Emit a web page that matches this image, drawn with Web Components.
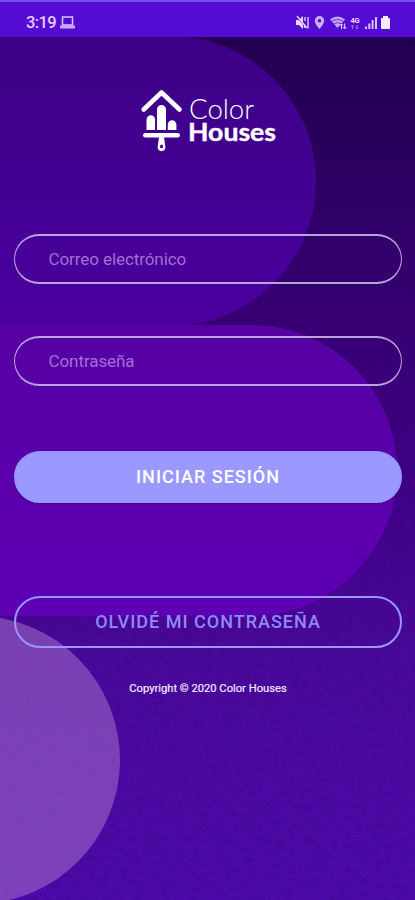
<!DOCTYPE html>
<html lang="es"><head><meta charset="utf-8"><title>Color Houses</title>
<style>html,body{margin:0;height:100%;overflow:hidden;background:#2b0061}body{font-family:Roboto,sans-serif}</style></head>
<body>
<login-screen></login-screen>
<script>
const define = (name, html) => {
  const t = document.createElement('template');
  t.innerHTML = html;
  customElements.define(name, class extends HTMLElement {
    constructor() { super(); this.attachShadow({mode: 'open'}).append(t.content.cloneNode(true)); }
  });
};

define('screen-backdrop', `<style>:host{display:block;position:absolute;inset:0;z-index:-1}svg{display:block}</style>
<svg width="415" height="900" viewBox="0 0 415 900">
<defs>
<linearGradient id="base" x1="0" y1="37" x2="0" y2="900" gradientUnits="userSpaceOnUse"><stop offset="0" stop-color="#210050"/><stop offset=".3" stop-color="#350070"/><stop offset=".5" stop-color="#3e0084"/><stop offset=".7" stop-color="#480898"/><stop offset=".85" stop-color="#4c09a2"/><stop offset="1" stop-color="#4d0aa8"/></linearGradient>
<linearGradient id="p1" x1="0" y1="0" x2="0" y2="1"><stop offset="0" stop-color="#3c0085"/><stop offset="1" stop-color="#4b009f"/></linearGradient>
<linearGradient id="p2" x1="0" y1="0" x2="0" y2="1"><stop offset="0" stop-color="#5600a3"/><stop offset="1" stop-color="#5e00b4"/></linearGradient>
<linearGradient id="fade" x1="0" y1="350" x2="0" y2="900" gradientUnits="userSpaceOnUse"><stop offset="0" stop-color="#000"/><stop offset=".5" stop-color="#999"/><stop offset="1" stop-color="#fff"/></linearGradient>
<mask id="m"><rect y="350" width="415" height="550" fill="url(#fade)"/></mask>
<filter id="grain" x="0" y="0" width="100%" height="100%" color-interpolation-filters="sRGB"><feTurbulence type="fractalNoise" baseFrequency=".11 .22" numOctaves="4" seed="8"/><feColorMatrix values="0 0 0 0 .12  0 0 0 0 0  0 0 0 0 .35  1.7 0 0 0 -.75"/></filter>
</defs>
<rect width="415" height="900" fill="url(#base)"/>
<g mask="url(#m)"><g transform="rotate(14 200 700)"><rect x="-150" y="280" width="700" height="720" filter="url(#grain)" opacity=".28"/></g></g>
<path d="M0 36H171A145 145 0 0 1 171 326H0Z" fill="url(#p1)"/>
<path d="M0 325H251.500A145.500 145.500 0 0 1 251.500 616H0Z" fill="url(#p2)"/>
<circle cx="-24" cy="760" r="144" fill="#b27ad0" fill-opacity=".49"/>
</svg>`);

define('status-bar', `<style>:host{display:flex;box-sizing:border-box;height:37px;background:#540bd4;border-top:2px solid #764be2;padding:6px 24px 0 26px;justify-content:space-between;align-items:center;color:#e3d0fb;flex:none}
.l{display:flex;align-items:center;gap:4px;font:500 16.500px/20px Roboto,sans-serif;letter-spacing:-.6px}svg{display:block}</style>
<div class="l"><span>3:19</span><svg width="15" height="13" viewBox="0 0 15 13"><path d="M2.500 1h10v8h-10z" fill="none" stroke="#d9c5fa" stroke-width="1.500"/><path d="M0 9.500h15V12.500H0z" fill="#c5adf4"/></svg></div>
<svg width="96" height="16" viewBox="295 14 96 16" fill="#eadbff">
<path d="M296 19h3l4-4v13l-4-4h-3z"/><path d="M296.500 15.500l11 12" stroke="#540bd4" stroke-width="1.300"/><path d="M297 15l10 12M305 16v4M308 16v11.500M304.500 24v3" stroke="#eadbff" stroke-width="1.300"/>
<path fill-rule="evenodd" d="M319.500 15a4.700 4.700 0 0 0-4.700 4.700c0 3.300 4.700 8.300 4.700 8.300s4.700-5 4.700-8.300a4.700 4.700 0 0 0-4.700-4.700zm0 3a1.800 1.800 0 1 1 0 3.600 1.800 1.800 0 0 1 0-3.600z" fill="#c9aff5"/>
<path d="M330 18.500q7.500-6 15 0l-7.500 8.500z" opacity=".75"/><path d="M331.500 20.500q6-4 12 0M333.500 23q4-3 8 0" fill="none" stroke="#540bd4" stroke-width=".8"/><path d="M340 22h6.500v6.500h-6.500z" fill="#540bd4"/><path d="M341.500 28v-5M340 24.500l1.500-1.800 1.500 1.800M344.700 22.500v5M343.200 26l1.500 1.800 1.500-1.800" stroke="#eadbff" fill="none"/>
<text x="350.500" y="21.500" font-family="Roboto,sans-serif" font-size="7.500" font-weight="700" textLength="9">4G</text>
<path d="M352.500 28v-4M351 25.500l1.500-1.500 1.500 1.500M357 24v4M355.500 26.500l1.500 1.500 1.500-1.500" stroke="#9c72ea" fill="none"/>
<path d="M365 25.500h2V28h-2zM368.300 22.500h2V28h-2zM371.600 19h2v9h-2zM375 16h2v12h-2z" fill="#d6c1fa"/>
<path d="M383 15h5v2h1.200q.8 0 .8.800V27.300q0 .8-.8.800h-7.400q-.8 0-.8-.8V17.800q0-.8.800-.8h1.200z" fill="#f4ebff"/>
</svg>`);

define('brand-logo', `<style>:host{display:block;width:136px;height:64px}svg{display:block}</style>
<svg width="136" height="64" viewBox="140 88 136 64" fill="#fff">
<path d="M143.700 109.500L161.500 92.500 179.500 109.500" fill="none" stroke="#fff" stroke-width="4.600" stroke-linecap="round" stroke-linejoin="round"/>
<path d="M146.500 130v-10.500a4.300 4.300 0 0 1 8.600 0V130zM157 130v-20.500a4.500 4.500 0 0 1 9 0V130zM167.800 130v-5.500a4.300 4.300 0 0 1 8.600 0V130z"/>
<path d="M145.300 135.300h32.400" stroke="#fff" stroke-width="4.500" stroke-linecap="round"/>
<path fill-rule="evenodd" d="M159 137h5l1.300 9.500a3.900 3.900 0 1 1-7.600 0zM161.500 144.500a1.500 1.900 0 1 0 0 3.800a1.500 1.900 0 0 0 0-3.800z"/>
<text x="189" y="119" font-family="Lato,sans-serif" font-weight="300" font-size="27" textLength="65" lengthAdjust="spacingAndGlyphs">Color</text>
<text x="188" y="141" font-family="Lato,sans-serif" font-weight="700" font-size="25" textLength="88" lengthAdjust="spacingAndGlyphs" stroke="#fff" stroke-width=".4">Houses</text>
</svg>`);

define('text-field', `<style>:host{display:flex;align-items:center;box-sizing:border-box;height:50px;border:1.500px solid #b9a4dc;border-width:2px 1.500px;border-radius:25px;padding-left:33.500px;font:400 17px/20px Roboto,sans-serif;letter-spacing:-.08px;color:#a46fd4}</style><slot></slot>`);

define('pill-button', `<style>:host{display:flex;align-items:center;justify-content:center;box-sizing:border-box;height:52px;border:2px solid #9996fc;border-radius:26px;font:500 18px/20px Roboto,sans-serif;letter-spacing:1px;color:#9288fa}
:host([filled]){background:#9b99ff;color:#fff;box-shadow:0 1px 2px #25006a80}</style><slot></slot>`);

define('login-screen', `<style>:host{display:flex;flex-direction:column;position:relative;z-index:0;width:415px;height:900px;overflow:hidden}
main{display:flex;flex-direction:column;padding:51px 13px 0 14px}
brand-logo{margin-left:126px}.f1{margin-top:82px}.f2{margin-top:52px}.b1{margin-top:65px}.b2{margin-top:93px}
p{margin:33px 0 0;text-align:center;font:400 11.200px/16px Roboto,sans-serif;color:#f1e8ff;-webkit-text-stroke:.2px #f1e8ff}</style>
<screen-backdrop></screen-backdrop><status-bar></status-bar>
<main><brand-logo></brand-logo><text-field class="f1">Correo electrónico</text-field><text-field class="f2">Contraseña</text-field>
<pill-button filled class="b1" role="button">INICIAR SESIÓN</pill-button><pill-button class="b2" role="button">OLVIDÉ MI CONTRASEÑA</pill-button>
<p>Copyright © 2020 Color Houses</p></main>`);
</script>
</body></html>
